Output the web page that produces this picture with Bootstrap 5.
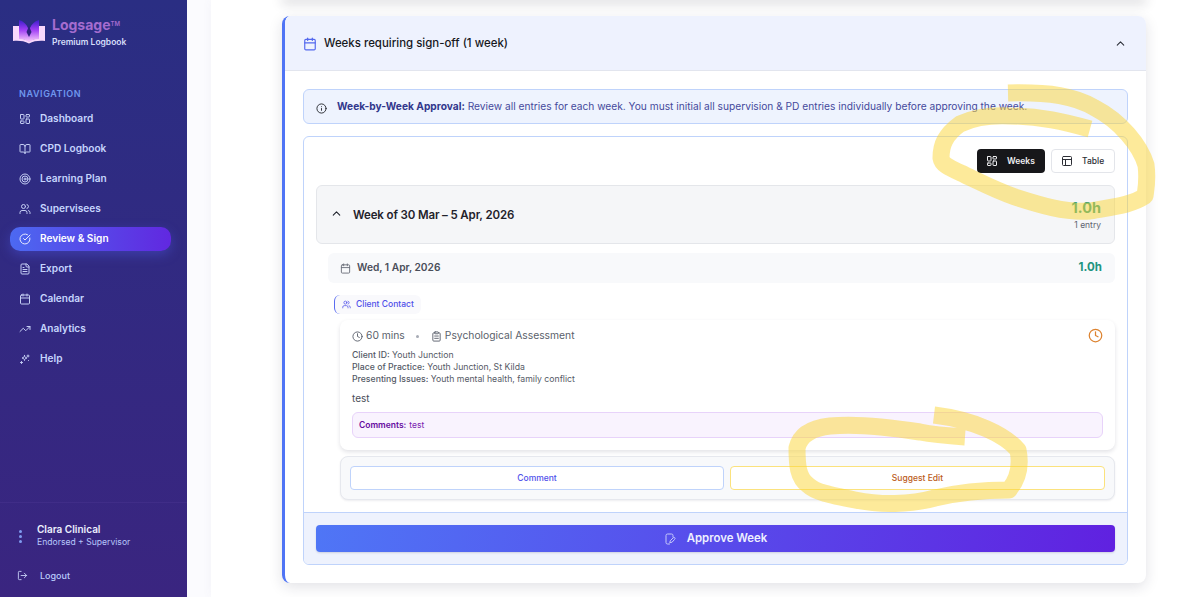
<!DOCTYPE html>
<html lang="en">
<head>
  <meta charset="UTF-8">
  <title>Logsage - Review &amp; Sign</title>
  <link href="https://cdn.jsdelivr.net/npm/bootstrap@5.3.3/dist/css/bootstrap.min.css" rel="stylesheet">
  <style>
    html, body { height: 100%; }
    body { font-family: Inter, "Liberation Sans", sans-serif; background: #fbfbfe; overflow: hidden; position: relative; color: #1a1c22; }
    svg.ico { fill: none; stroke: currentColor; stroke-width: 2; stroke-linecap: round; stroke-linejoin: round; flex-shrink: 0; }

    .side { width: 187px; height: 597px; background: linear-gradient(180deg, #2a2e83 0%, #3a2580 100%); flex-shrink: 0; }
    .brand { padding: 17px 0 0 13px; height: 85px; gap: 7px; }
    .brand svg { margin-top: 2px; }
    .brand-name { font-size: 14px; font-weight: 700; line-height: 14px; color: #a56ccf; margin-top: 1px; }
    .brand-name sup { font-size: 6px; top: -4px; font-weight: 600; position: relative; vertical-align: baseline; }
    .brand-sub { font-size: 8.5px; font-weight: 600; line-height: 11px; color: #d6def9; margin-top: 5px; }
    .nav-head { font-size: 9px; font-weight: 600; letter-spacing: .6px; color: #6f97ee; line-height: 12px; padding: 3px 0 0 19px; height: 22px; }
    .nav-row { height: 24px; margin: 0 16px 6px 10px; padding-left: 9px; font-size: 10.1px; font-weight: 600; color: #c6d5fd; border-radius: 10px; gap: 9px; }
    .nav-row svg { color: #c4cdf3; }
    .nav-row.on { background: linear-gradient(90deg, #4c69f1, #6128e0); color: #fff; box-shadow: 0 4px 12px rgba(79, 90, 230, .4); }
    .nav-row.on svg { color: #e6e9ff; }
    .user-box { border-top: 1px solid #402d88; margin-top: auto; height: 95px; padding: 20px 0 0 17px; }
    .user-line { gap: 14px; }
    .user-name { font-size: 10px; font-weight: 600; color: #eceffd; line-height: 13px; }
    .user-role { font-size: 8.6px; color: #b7c6fb; line-height: 13px; }
    .dots { gap: 2px; width: 6px; }
    .dots span { width: 3px; height: 3px; border-radius: 50%; background: #7f9cf0; }
    .logout { font-size: 9px; font-weight: 500; color: #b9cbfb; gap: 12px; margin-top: 20px; }
    .logout svg { color: #c4cdf3; }

    .panel { margin-left: 24px; flex-grow: 1; background: #fff; height: 597px; padding: 16px 32px 0 71px; box-shadow: 0 0 10px rgba(90, 90, 130, .05); position: relative; }
    .prev-card { position: absolute; left: 71px; right: 32px; top: -6px; height: 6px; box-shadow: 0 3px 12px rgba(30, 30, 50, .22); }
    .sign-card { height: 567px; border-left: 3px solid #4f74f5; border-radius: 8px; background: #fff; box-shadow: 0 4px 14px rgba(30, 30, 60, .13); overflow: hidden; }
    .sign-head { height: 55px; background: #eef2fe; border-bottom: 1px solid #e2e5ee; padding: 1px 19px 0 18px; font-size: 11.45px; font-weight: 500; color: #16181d; gap: 7px; }
    .sign-head svg.cal { color: #5368ee; }
    .sign-head svg.chev { color: #2c3038; margin-left: auto; }
    .sign-body { padding: 18px 18px 0 18px; }
    .info-box { height: 35px; background: #eef3fe; border: 1px solid #bfd3fb; border-radius: 6px; padding: 0 0 0 12px; font-size: 10.2px; color: #45499c; gap: 10px; }
    .info-box b { font-weight: 700; color: #32378c; }
    .info-box svg { color: #23252b; margin-top: 3px; }
    .week-box { height: 429px; margin-top: 12px; border: 1px solid #bfd3fb; border-radius: 6px; overflow: hidden; }
    .week-inner { padding: 12px 12px 0 12px; height: 375px; }
    .tog-line { gap: 6px; }
    .tog { height: 24px; border-radius: 4px; font-size: 8.5px; font-weight: 600; gap: 9px; padding: 0 9px; }
    .tog.dark { width: 68px; background: #17171a; color: #f0f0f2; }
    .tog.light { width: 64px; background: #fff; border: 1px solid #e3e5ea; color: #2c2e35; font-weight: 500; }
    .week-row { height: 59px; margin-top: 12px; background: #f5f6f8; border: 1px solid #e4e6ea; border-radius: 6px; padding: 0 13px 2px 13px; gap: 10px; font-size: 11.5px; font-weight: 600; letter-spacing: -.13px; color: #1f222b; }
    .week-sum { letter-spacing: 0; margin-top: 4px; }
    .week-hrs { font-size: 14.5px; font-weight: 700; color: #2a9d80; line-height: 16px; }
    .week-cnt { font-size: 8.5px; font-weight: 400; color: #5f6470; line-height: 12px; margin-top: 3px; }
    .day-row { height: 30px; margin: 9px 0 0 12px; background: #f8f9fb; border-radius: 6px; padding: 0 13px 0 12px; font-size: 10.2px; font-weight: 600; color: #4a4e59; gap: 6px; }
    .day-row svg { color: #6a6e7a; }
    .day-hrs { margin-left: auto; font-size: 11.5px; font-weight: 700; color: #21947f; }
    .type-tag { height: 19px; margin: 12px 0 0 18px; width: 87px; border-left: 1px solid #5a6cf0; border-radius: 6px; background: #f9f9fc; padding-left: 7px; gap: 5px; font-size: 8.5px; font-weight: 500; color: #4f50ea; }
    .entry { height: 130px; margin: 6px 0 0 24px; background: #fff; border-radius: 8px; box-shadow: 0 2px 4px rgba(30, 30, 60, .13); padding: 7px 12px 0 12px; position: relative; }
    .meta-row { font-size: 10.3px; color: #5a5f6b; gap: 3px; height: 18px; }
    .meta-row .sep { width: 3px; height: 3px; border-radius: 50%; background: #a7abb5; margin: 0 9px 0 8px; }
    .entry-lines { font-size: 8.7px; line-height: 12px; color: #555a66; margin-top: 4px; }
    .entry-lines b { font-weight: 500; }
    .entry-note { font-size: 10px; color: #4a4e59; line-height: 13px; margin-top: 7px; }
    .note-box { height: 26px; margin-top: 7px; background: #f9f3fe; border: 1px solid #e8d3fa; border-radius: 6px; padding-left: 6px; font-size: 8.5px; color: #7a1fb0; gap: 3px; }
    .note-box b { font-weight: 600; color: #650a9e; }
    .late { position: absolute; right: 12px; top: 8px; color: #dd8330; }
    .act-box { height: 44px; margin: 6px 0 0 24px; background: #f8f9fb; border: 1px solid #e6e8ee; border-radius: 8px; padding: 0 9px 1px; gap: 6px; box-shadow: 0 1px 2px rgba(30, 30, 60, .08); }
    .act-btn { flex: 1 1 0; height: 24px; padding-top: 1px; background: #fff; border-radius: 4px; font-size: 8.5px; font-weight: 500; }
    .act-btn.blue { flex: 0 0 374px; border: 1px solid #bfd3fb; color: #4f50ea; }
    .act-btn.gold { border: 1px solid #fbe27d; color: #bb5c21; }
    .week-foot { height: 52px; background: #eef2fd; border-top: 1px solid #bfd3fb; padding: 12px 12px 0 12px; }
    .approve { height: 27px; border-radius: 4px; background: linear-gradient(100deg, #4f76f6, #6021e0); color: #eef0ff; font-size: 11.4px; font-weight: 600; gap: 11px; box-shadow: 0 1px 2px rgba(30, 30, 60, .15); }
    .approve svg { color: #c6c9fa; }

    .scribble { position: absolute; left: 0; top: 0; pointer-events: none; }
    .scribble path { fill: none; stroke: #fcd535; stroke-opacity: .5; stroke-width: 17; stroke-linejoin: round; }
  </style>
</head>
<body>
  <svg width="0" height="0" class="position-absolute">
    <symbol id="i-dash" viewBox="0 0 24 24"><rect x="3" y="3" width="7" height="9" rx="1"/><rect x="14" y="3" width="7" height="5" rx="1"/><rect x="14" y="12" width="7" height="9" rx="1"/><rect x="3" y="16" width="7" height="5" rx="1"/></symbol>
    <symbol id="i-book" viewBox="0 0 24 24"><path d="M12 7v14"/><path d="M3 18a1 1 0 0 1-1-1V4a1 1 0 0 1 1-1h5a4 4 0 0 1 4 4 4 4 0 0 1 4-4h5a1 1 0 0 1 1 1v13a1 1 0 0 1-1 1h-6a3 3 0 0 0-3 3 3 3 0 0 0-3-3z"/></symbol>
    <symbol id="i-target" viewBox="0 0 24 24"><circle cx="12" cy="12" r="10"/><circle cx="12" cy="12" r="6"/><circle cx="12" cy="12" r="2"/></symbol>
    <symbol id="i-users" viewBox="0 0 24 24"><path d="M16 21v-2a4 4 0 0 0-4-4H6a4 4 0 0 0-4 4v2"/><circle cx="9" cy="7" r="4"/><path d="M22 21v-2a4 4 0 0 0-3-3.87"/><path d="M16 3.13a4 4 0 0 1 0 7.75"/></symbol>
    <symbol id="i-check" viewBox="0 0 24 24"><path d="M21.8 10A10 10 0 1 1 17 3.3"/><path d="m9 11 3 3L22 4"/></symbol>
    <symbol id="i-file" viewBox="0 0 24 24"><path d="M15 2H6a2 2 0 0 0-2 2v16a2 2 0 0 0 2 2h12a2 2 0 0 0 2-2V7Z"/><path d="M14 2v4a2 2 0 0 0 2 2h4"/><path d="M10 9H8"/><path d="M16 13H8"/><path d="M16 17H8"/></symbol>
    <symbol id="i-cal" viewBox="0 0 24 24"><path d="M8 2v4"/><path d="M16 2v4"/><rect x="3" y="4" width="18" height="18" rx="2"/><path d="M3 10h18"/></symbol>
    <symbol id="i-trend" viewBox="0 0 24 24"><path d="m22 7-8.5 8.5-5-5L2 17"/><path d="M16 7h6v6"/></symbol>
    <symbol id="i-spark" viewBox="0 0 24 24"><path d="M11 5c.6 3.400 1.600 4.400 5 5-3.400.6-4.400 1.600-5 5-.6-3.400-1.600-4.400-5-5 3.400-.6 4.400-1.600 5-5z"/><path d="M18 4v4"/><path d="M16 6h4"/><path d="M5 17v4"/><path d="M3 19h4"/><path d="M19 15h.01"/></symbol>
    <symbol id="i-out" viewBox="0 0 24 24"><path d="M9 21H5a2 2 0 0 1-2-2V5a2 2 0 0 1 2-2h4"/><path d="m16 17 5-5-5-5"/><path d="M21 12H9"/></symbol>
    <symbol id="i-up" viewBox="0 0 24 24"><path d="m18 15-6-6-6 6"/></symbol>
    <symbol id="i-info" viewBox="0 0 24 24"><circle cx="12" cy="12" r="10"/><path d="M12 16v-4"/><path d="M12 8h.01"/></symbol>
    <symbol id="i-clock" viewBox="0 0 24 24"><circle cx="12" cy="12" r="10"/><path d="M12 6v6l4 2"/></symbol>
    <symbol id="i-clip" viewBox="0 0 24 24"><rect x="8" y="2" width="8" height="4" rx="1"/><path d="M16 4h2a2 2 0 0 1 2 2v14a2 2 0 0 1-2 2H6a2 2 0 0 1-2-2V6a2 2 0 0 1 2-2h2"/><path d="M8 11h8"/><path d="M8 16h8"/></symbol>
    <symbol id="i-table" viewBox="0 0 24 24"><rect x="3" y="3" width="18" height="18" rx="2"/><path d="M3 9h18"/><path d="M9 21V9"/></symbol>
    <symbol id="i-pen" viewBox="0 0 24 24"><path d="M11 22H7a3 3 0 0 1-3-3V5a3 3 0 0 1 3-3h8a3 3 0 0 1 3 3v3"/><path d="M21.500 12.500a2 2 0 0 0-3-3l-6 6-1 4 4-1z"/></symbol>
  </svg>

  <div class="d-flex">
    <aside class="side d-flex flex-column">
      <div class="brand d-flex">
        <svg width="32" height="25" viewBox="0 0 32 25">
          <defs><linearGradient id="lg" x1="0" y1="0" x2="0" y2="1"><stop offset="0" stop-color="#3c1ccc"/><stop offset=".45" stop-color="#a03ff5"/><stop offset="1" stop-color="#fbd0fb"/></linearGradient></defs>
          <path d="M0 7h6v13c4-.5 7 .5 10 2.500 3-2 6-3 10-2.500V7h6v15c-6-.5-11 0-16 2.500C11 22 6 21.500 0 22z" fill="#f8d8fb"/>
          <path d="M6 1c4 1 7.500 4 9 8l1 3 1-3c1.500-4 5-7 9-8v19c-4 0-7.500 1-10 3-2.500-2-6-3-10-3z" fill="url(#lg)"/>
          <path d="M16 7l2.500 6-2.500 5-2.500-5z" fill="#2e2280"/>
        </svg>
        <div>
          <div class="brand-name">Logsage<sup>TM</sup></div>
          <div class="brand-sub">Premium Logbook</div>
        </div>
      </div>
      <div class="nav-head">NAVIGATION</div>
      <div class="nav-row d-flex align-items-center"><svg class="ico" width="12" height="12"><use href="#i-dash"/></svg>Dashboard</div>
      <div class="nav-row d-flex align-items-center"><svg class="ico" width="12" height="12"><use href="#i-book"/></svg>CPD Logbook</div>
      <div class="nav-row d-flex align-items-center"><svg class="ico" width="12" height="12"><use href="#i-target"/></svg>Learning Plan</div>
      <div class="nav-row d-flex align-items-center"><svg class="ico" width="12" height="12"><use href="#i-users"/></svg>Supervisees</div>
      <div class="nav-row on d-flex align-items-center"><svg class="ico" width="12" height="12"><use href="#i-check"/></svg>Review &amp; Sign</div>
      <div class="nav-row d-flex align-items-center"><svg class="ico" width="12" height="12"><use href="#i-file"/></svg>Export</div>
      <div class="nav-row d-flex align-items-center"><svg class="ico" width="12" height="12"><use href="#i-cal"/></svg>Calendar</div>
      <div class="nav-row d-flex align-items-center"><svg class="ico" width="12" height="12"><use href="#i-trend"/></svg>Analytics</div>
      <div class="nav-row d-flex align-items-center"><svg class="ico" width="12" height="12"><use href="#i-spark"/></svg>Help</div>
      <div class="user-box">
        <div class="user-line d-flex align-items-center">
          <div class="dots d-flex flex-column align-items-center"><span></span><span></span><span></span></div>
          <div>
            <div class="user-name">Clara Clinical</div>
            <div class="user-role">Endorsed + Supervisor</div>
          </div>
        </div>
        <div class="logout d-flex align-items-center"><svg class="ico" width="11" height="11"><use href="#i-out"/></svg>Logout</div>
      </div>
    </aside>

    <main class="panel">
      <div class="prev-card"></div>
      <div class="sign-card">
        <div class="sign-head d-flex align-items-center">
          <svg class="ico cal" width="14" height="14"><use href="#i-cal"/></svg>
          Weeks requiring sign-off (1 week)
          <svg class="ico chev" width="13" height="13"><use href="#i-up"/></svg>
        </div>
        <div class="sign-body">
          <div class="info-box d-flex align-items-center">
            <svg class="ico" width="11" height="11"><use href="#i-info"/></svg>
            <div><b>Week-by-Week Approval:</b> Review all entries for each week. You must initial all supervision &amp; PD entries individually before approving the week.</div>
          </div>
          <div class="week-box">
            <div class="week-inner">
              <div class="tog-line d-flex justify-content-end">
                <div class="tog dark d-flex align-items-center"><svg class="ico" width="12" height="12"><use href="#i-dash"/></svg>Weeks</div>
                <div class="tog light d-flex align-items-center"><svg class="ico" width="12" height="12"><use href="#i-table"/></svg>Table</div>
              </div>
              <div class="week-row d-flex align-items-center">
                <svg class="ico" width="13" height="13"><use href="#i-up"/></svg>
                <span class="pt-1">Week of 30 Mar – 5 Apr, 2026</span>
                <div class="week-sum ms-auto text-end">
                  <div class="week-hrs">1.0h</div>
                  <div class="week-cnt">1 entry</div>
                </div>
              </div>
              <div class="day-row d-flex align-items-center">
                <svg class="ico" width="11" height="11"><use href="#i-cal"/></svg>
                Wed, 1 Apr, 2026
                <span class="day-hrs">1.0h</span>
              </div>
              <div class="type-tag d-flex align-items-center"><svg class="ico" width="9" height="9"><use href="#i-users"/></svg>Client Contact</div>
              <div class="entry">
                <div class="meta-row d-flex align-items-center">
                  <svg class="ico" width="11" height="11"><use href="#i-clock"/></svg>60 mins<span class="sep"></span>
                  <svg class="ico" width="11" height="11"><use href="#i-clip"/></svg>Psychological Assessment
                </div>
                <svg class="ico late" width="15" height="15"><use href="#i-clock"/></svg>
                <div class="entry-lines">
                  <div><b>Client ID:</b> Youth Junction</div>
                  <div><b>Place of Practice:</b> Youth Junction, St Kilda</div>
                  <div><b>Presenting Issues:</b> Youth mental health, family conflict</div>
                </div>
                <div class="entry-note">test</div>
                <div class="note-box d-flex align-items-center"><b>Comments:</b> test</div>
              </div>
              <div class="act-box d-flex align-items-center">
                <div class="act-btn blue d-flex align-items-center justify-content-center">Comment</div>
                <div class="act-btn gold d-flex align-items-center justify-content-center">Suggest Edit</div>
              </div>
            </div>
            <div class="week-foot">
              <div class="approve d-flex align-items-center justify-content-center">
                <svg class="ico" width="12" height="12"><use href="#i-pen"/></svg>
                Approve Week
              </div>
            </div>
          </div>
        </div>
      </div>
    </main>
  </div>

  <svg class="scribble" width="1178" height="597" viewBox="0 0 1178 597">
    <path d="M1008 93 C1050 92 1075 96 1095 108 C1120 121 1140 145 1146 165 C1148 180 1146 188 1145 196 C1130 206 1110 207 1090 211 C1065 213 1040 205 1015 197 C995 190 980 182 965 175 C950 168 942 165 941 158 C941 145 945 135 960 124 C975 117 990 115 1010 116 C1040 116 1065 122 1090 129"/>
    <path d="M934 415 C975 420 1005 435 1018 450 C1021 465 1019 478 1009 490 C985 490 960 492 935 498 C910 505 880 505 855 500 C830 495 815 492 808 485 C798 478 797 465 797 448 C800 435 812 428 830 426 C860 423 895 428 920 432 C935 435 950 436 965 437"/>
  </svg>
</body>
</html>
